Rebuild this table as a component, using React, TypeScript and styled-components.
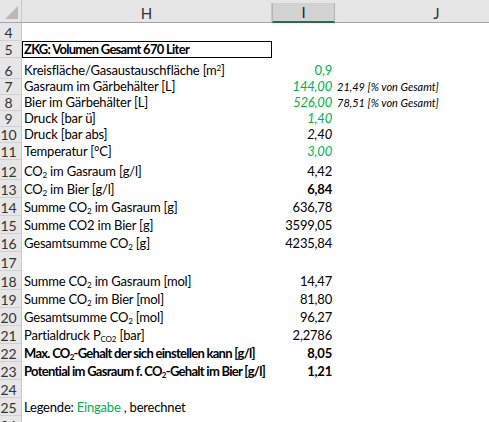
import React from "react";
import styled, { createGlobalStyle, css } from "styled-components";

const Global = createGlobalStyle`
  html, body { margin: 0; padding: 0; background: #ffffff; }
  body { font-family: "Lato", "Liberation Sans", sans-serif; }
  #root { width: 489px; height: 422px; overflow: hidden; }
`;

const COLS = "22px 250px 63px 204px";
const GREEN = "#00b050";

const Sheet = styled.div`
  display: flex;
  flex-direction: column;
  width: 539px;
  background: #fff;
  font-family: "Lato", "Liberation Sans", sans-serif;
  font-size: 13px;
  letter-spacing: -0.2px;
  color: #000;
`;

const HeaderBar = styled.div`
  display: grid;
  grid-template-columns: ${COLS};
  height: 23px;
  background: #e6e6e6;
  border-bottom: 1px solid #a6a6a6;
  box-sizing: border-box;
`;

const Corner = styled.div`
  display: flex;
  align-items: flex-end;
  justify-content: flex-end;
  padding: 0 3px 3px 0;
  border-right: 1px solid #c8c8c8;
  box-sizing: border-box;
`;

const ColHead = styled.div<{ $selected?: boolean }>`
  display: flex;
  align-items: center;
  justify-content: center;
  margin-top: 3px;
  border-right: 1px solid #c8c8c8;
  box-sizing: border-box;
  font-family: "Lato", "Liberation Sans", sans-serif;
  font-size: 15px;
  letter-spacing: 0;
  color: #333;
  ${(p) =>
    p.$selected &&
    css`
      background: #d2d2d2;
      border-left: 1px solid #b4b4b4;
      border-right: 1px solid #b4b4b4;
      border-bottom: 2px solid #217346;
      margin-bottom: -1px;
      color: #222;
    `}
`;

const Row = styled.div<{ $h: number }>`
  display: grid;
  grid-template-columns: ${COLS};
  height: ${(p) => p.$h}px;
`;

const RowNum = styled.div`
  display: flex;
  align-items: flex-end;
  justify-content: center;
  padding: 0 4px 1px 0;
  background: #e6e6e6;
  border-right: 1px solid #c8c8c8;
  border-bottom: 1px solid #d0d0d0;
  box-sizing: border-box;
  font-size: 14px;
  letter-spacing: 0;
  line-height: 13px;
  color: #333;
  overflow: hidden;
`;

const Cell = styled.div<{ $align?: "left" | "right"; $boxed?: boolean }>`
  display: flex;
  align-items: flex-end;
  justify-content: ${(p) => (p.$align === "right" ? "flex-end" : "flex-start")};
  padding: 0 ${(p) => (p.$align === "right" ? "3px" : "0")} 1px
    ${(p) => (p.$align === "right" ? "0" : "2px")};
  box-sizing: border-box;
  white-space: nowrap;
  line-height: 15px;
  ${(p) =>
    p.$boxed &&
    css`
      border: 1px solid #000;
      padding-left: 1px;
      padding-bottom: 0;
    `}
`;

const Txt = styled.span<{ $green?: boolean; $italic?: boolean; $bold?: boolean }>`
  color: ${(p) => (p.$green ? GREEN : "#000")};
  font-style: ${(p) => (p.$italic ? "italic" : "normal")};
  font-weight: ${(p) => (p.$bold ? 700 : 400)};
`;

const BoldLabel = styled.span`
  font-weight: 700;
  letter-spacing: -0.72px;
`;

const Note = styled.span`
  font-size: 11px;
  font-style: italic;
  letter-spacing: 0;
  color: #000;
`;

const Sub = styled.sub`
  font-size: 0.62em;
  vertical-align: -0.3em;
  line-height: 0;
`;

const Sup = styled.sup`
  font-size: 0.62em;
  vertical-align: 0.55em;
  line-height: 0;
`;

const CO2 = () => (
  <>
    CO<Sub>2</Sub>
  </>
);

type RowData = {
  n: number;
  h: number;
  label?: React.ReactNode;
  labelBold?: boolean;
  boxed?: boolean;
  value?: string;
  green?: boolean;
  italic?: boolean;
  bold?: boolean;
  note?: string;
};

const rows: RowData[] = [
  { n: 4, h: 18 },
  { n: 5, h: 17, label: "ZKG: Volumen Gesamt 670 Liter", labelBold: true, boxed: true },
  {
    n: 6,
    h: 21,
    label: (
      <>
        Kreisfläche/Gasaustauschfläche [m<Sup>2</Sup>]
      </>
    ),
    value: "0,9",
    green: true,
  },
  { n: 7, h: 16, label: "Gasraum im Gärbehälter [L]", value: "144,00", green: true, italic: true, note: "21,49 [% von Gesamt]" },
  { n: 8, h: 16, label: "Bier im Gärbehälter [L]", value: "526,00", green: true, italic: true, note: "78,51 [% von Gesamt]" },
  { n: 9, h: 16, label: "Druck [bar ü]", value: "1,40", green: true, italic: true },
  { n: 10, h: 16, label: "Druck [bar abs]", value: "2,40", italic: true },
  { n: 11, h: 17, label: "Temperatur [°C]", value: "3,00", green: true, italic: true },
  { n: 12, h: 20, label: <><CO2 /> im Gasraum [g/l]</>, value: "4,42" },
  { n: 13, h: 18, label: <><CO2 /> im Bier [g/l]</>, value: "6,84", bold: true },
  { n: 14, h: 18, label: <>Summe <CO2 /> im Gasraum [g]</>, value: "636,78" },
  { n: 15, h: 18, label: "Summe CO2 im Bier [g]", value: "3599,05" },
  { n: 16, h: 18, label: <>Gesamtsumme <CO2 /> [g]</>, value: "4235,84" },
  { n: 17, h: 19 },
  { n: 18, h: 19, label: <>Summe <CO2 /> im Gasraum [mol]</>, value: "14,47" },
  { n: 19, h: 18, label: <>Summe <CO2 /> im Bier [mol]</>, value: "81,80" },
  { n: 20, h: 18, label: <>Gesamtsumme <CO2 /> [mol]</>, value: "96,27" },
  { n: 21, h: 18, label: <>Partialdruck P<Sub>CO2</Sub> [bar]</>, value: "2,2786" },
  { n: 22, h: 18, label: <>Max. <CO2 />-Gehalt der sich einstellen kann [g/l]</>, labelBold: true, value: "8,05", bold: true },
  { n: 23, h: 18, label: <>Potential im Gasraum f. <CO2 />-Gehalt im Bier [g/l]</>, labelBold: true, value: "1,21", bold: true },
  { n: 24, h: 18 },
  {
    n: 25,
    h: 18,
    label: (
      <>
        Legende: <Txt $green>Eingabe</Txt> , berechnet
      </>
    ),
  },
  { n: 26, h: 18 },
];

const CornerMark = () => (
  <svg width="13" height="13" viewBox="0 0 13 13">
    <polygon points="13,0 13,13 0,13" fill="#b9b9b9" />
  </svg>
);

export default function App() {
  return (
    <>
      <Global />
      <Sheet>
        <HeaderBar>
          <Corner>
            <CornerMark />
          </Corner>
          <ColHead>H</ColHead>
          <ColHead $selected>I</ColHead>
          <ColHead>J</ColHead>
        </HeaderBar>
        {rows.map((r) => (
          <Row key={r.n} $h={r.h}>
            <RowNum>{r.n}</RowNum>
            <Cell $boxed={r.boxed}>
              {r.label &&
                (r.labelBold ? <BoldLabel>{r.label}</BoldLabel> : <Txt>{r.label}</Txt>)}
            </Cell>
            <Cell $align="right">
              {r.value && (
                <Txt $green={r.green} $italic={r.italic} $bold={r.bold}>
                  {r.value}
                </Txt>
              )}
            </Cell>
            <Cell>{r.note && <Note>{r.note}</Note>}</Cell>
          </Row>
        ))}
      </Sheet>
    </>
  );
}
